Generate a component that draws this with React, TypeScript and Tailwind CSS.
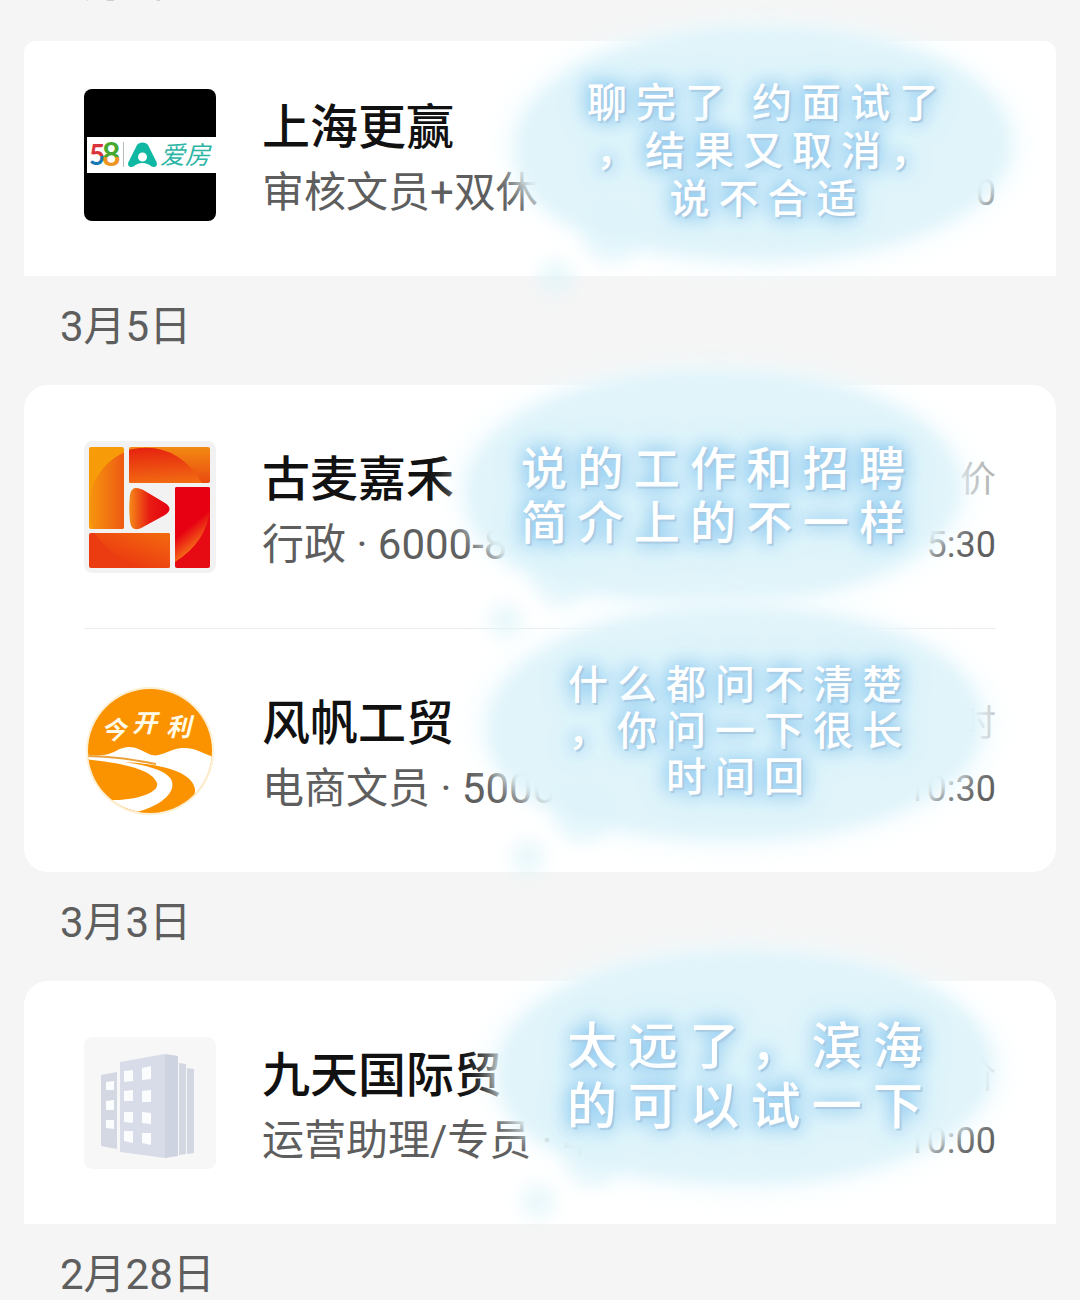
import { Fragment, type ReactNode } from 'react';
import clsx from 'clsx';

interface Interview {
  company: string;
  job: string;
  status?: string;
  time: string;
  logo: ReactNode;
  note: string[];
  noteBox: string;
  noteText: string;
}

function AifangLogo() {
  return (
    <svg viewBox="0 0 132 132" className="h-full w-full">
      <defs>
        <linearGradient id="five" x1="0" y1="0" x2="0" y2="1">
          <stop offset="0.56" stopColor="#d8343c" />
          <stop offset="0.56" stopColor="#1878b4" />
        </linearGradient>
        <linearGradient id="eight" x1="0" y1="0" x2="0" y2="1">
          <stop offset="0.58" stopColor="#46a82e" />
          <stop offset="0.58" stopColor="#ee9420" />
        </linearGradient>
      </defs>
      <rect width="132" height="132" fill="#000" />
      <rect x="3" y="48" width="129" height="36" fill="#fff" />
      <text x="5" y="76" fontSize="28" fontWeight="700" fontFamily="Lato, sans-serif" fill="url(#five)">5</text>
      <text x="18" y="77" fontSize="32" fontWeight="700" fontFamily="Lato, sans-serif" fill="url(#eight)">8</text>
      <path d="M39.500 53v25" stroke="#b4bcbc" strokeWidth="1" />
      <path
        fillRule="evenodd"
        fill="#10b8a4"
        d="M53 56c2-3.500 9-3.500 11 0l8.500 17c1.800 4-2 6-5 4.500-2.500-2-5.500-3.500-9-3.500s-6.500 1.500-9 3.500c-3 1.500-6.800-.5-5-4.500zM58.500 63.500a4.500 4.500 0 1 0 0 9 4.500 4.500 0 0 0 0-9z"
      />
      <text x="76" y="75" fontSize="25" fontStyle="italic" fontFamily="'Noto Sans CJK SC', sans-serif" fill="#2db5a6">
        爱房
      </text>
    </svg>
  );
}

function GumaiLogo() {
  return (
    <svg viewBox="0 0 132 132" className="h-full w-full">
      <defs>
        <linearGradient id="gLeft" x1="0" y1="0" x2="0.4" y2="0">
          <stop offset="0" stopColor="#f6960e" />
          <stop offset="0.7" stopColor="#ee5c12" />
        </linearGradient>
        <linearGradient id="gTop" x1="0.4" y1="0" x2="0.5" y2="1">
          <stop offset="0" stopColor="#e62410" />
          <stop offset="1" stopColor="#f26a12" />
        </linearGradient>
        <linearGradient id="gTopBack" x1="0" y1="0" x2="0" y2="1">
          <stop offset="0" stopColor="#f38a12" />
          <stop offset="1" stopColor="#ea4a10" />
        </linearGradient>
        <linearGradient id="gBottom" x1="1" y1="0" x2="0.2" y2="1">
          <stop offset="0" stopColor="#f47010" />
          <stop offset="1" stopColor="#ea3010" />
        </linearGradient>
        <linearGradient id="gRight" gradientUnits="userSpaceOnUse" x1="98" y1="84" x2="116" y2="106">
          <stop offset="0.2" stopColor="#e60012" />
          <stop offset="1" stopColor="#f77a18" />
        </linearGradient>
        <linearGradient id="gPlay" x1="0" y1="0" x2="1" y2="0">
          <stop offset="0" stopColor="#f58a18" />
          <stop offset="0.5" stopColor="#e81c12" />
          <stop offset="1" stopColor="#e60012" />
        </linearGradient>
        <clipPath id="cLeft"><rect x="5" y="6" width="35" height="82" rx="2" /></clipPath>
        <clipPath id="cTop"><rect x="45" y="6" width="81" height="36" rx="2" /></clipPath>
        <clipPath id="cBottom"><rect x="5" y="92" width="81" height="35" rx="2" /></clipPath>
        <clipPath id="cRight"><rect x="91" y="46" width="35" height="81" rx="2" /></clipPath>
      </defs>
      <rect width="132" height="132" rx="8" fill="#f3f2f2" />
      <g clipPath="url(#cLeft)">
        <rect x="5" y="6" width="35" height="82" fill="#f79c08" />
        <circle cx="65" cy="66" r="60" fill="url(#gLeft)" />
      </g>
      <g clipPath="url(#cTop)">
        <rect x="45" y="6" width="81" height="36" fill="url(#gTopBack)" />
        <path d="M40 10Q90-4 118 42H40Z" fill="url(#gTop)" />
      </g>
      <g clipPath="url(#cBottom)">
        <rect x="5" y="92" width="81" height="35" fill="#ea3c10" />
        <path d="M8 88Q26 118 62 127H90V88Z" fill="url(#gBottom)" />
      </g>
      <g clipPath="url(#cRight)">
        <rect x="91" y="46" width="35" height="81" fill="#e60a12" />
        <path d="M91 46H126V66Q124 100 91 121Z" fill="url(#gRight)" />
      </g>
      <path d="M46 54c2-10 9-7 15-4l20 12c6 4 6 8 0 12L59 86c-7 4-12 3-13-6-1-9-1-17 0-26z" fill="url(#gPlay)" />
    </svg>
  );
}

function JinkailiLogo() {
  return (
    <svg viewBox="0 0 132 132" className="h-full w-full">
      <defs>
        <clipPath id="disc"><circle cx="66" cy="66" r="62" /></clipPath>
      </defs>
      <circle cx="66" cy="66" r="64" fill="#fdf0d4" />
      <g clipPath="url(#disc)">
        <rect width="132" height="132" fill="#fb9300" />
        <path
          fill="#fff"
          d="M0 69C16 72 24 70 32 66 46 58 54 64 65 69 76 74 84 64 98 63 110 62 118 68 132 73V132H106C60 132 40 124 26 115 50 116 76 108 73 98 68 84 38 78 0 74z"
        />
        <path fill="#fb9300" d="M40 77C76 79 108 86 111 104 112 114 100 124 88 128 76 130 66 130 53 127 74 122 94 108 87 94 80 84 60 80 40 77z" />
        <path d="M0 71C30 71 50 75 72 79" fill="none" stroke="#eba23c" strokeWidth="2" />
      </g>
      <text
        x="17 48 82"
        y="54 47 51"
        fontSize="25"
        fontStyle="italic"
        fontWeight="700"
        fontFamily="'Noto Sans CJK SC', sans-serif"
        fill="#fffbe8"
      >
        今开利
      </text>
    </svg>
  );
}

function BuildingLogo() {
  return (
    <svg viewBox="0 0 132 132" className="h-full w-full">
      <rect width="132" height="132" rx="8" fill="#f7f7f7" />
      <path d="M17 38l16-3v77l-16-3z" fill="#d4d8e3" />
      <path d="M36 25l45-8v104l-45-6z" fill="#d8dce8" />
      <path d="M81 17l13 2v100l-13 2z" fill="#cdd3e0" />
      <path d="M95 26l7 1v90l-7 1zM103 31l7 1v84l-7 1z" fill="#d2d7e2" />
      <g fill="#fbfcfd">
        <path d="M22 45l8-1v9h-8zM22 64l8-1v10h-8zM22 83h8v9l-8-1z" />
        <path d="M40 34l9-1v11l-9 1zM40 54l9-1v11h-9zM40 75h9v11l-9-1zM40 94h9v12l-9-2z" />
        <path d="M58 31l9-2v13l-9 1zM58 54l9-1v12h-9zM58 75l9 1v11l-9-1zM58 96h9v12l-9-2z" />
      </g>
    </svg>
  );
}

// soft speech cloud with two trailing puffs
function Cloud() {
  return (
    <svg viewBox="0 0 500 234" className="absolute inset-0 h-full w-full overflow-visible">
      <defs>
        <filter id="halo" x="-30%" y="-50%" width="160%" height="200%">
          <feGaussianBlur stdDeviation="14" />
        </filter>
        <filter id="edge" x="-30%" y="-50%" width="160%" height="200%">
          <feGaussianBlur stdDeviation="8" />
        </filter>
        <filter id="puff" x="-80%" y="-80%" width="260%" height="260%">
          <feGaussianBlur stdDeviation="9" />
        </filter>
      </defs>
      <ellipse cx="250" cy="119" rx="258" ry="124" fill="#f0fbfe" opacity="0.8" filter="url(#halo)" />
      <path
        d="M3 124C3 54 110 2 246 2C390 2 497 48 497 120C497 182 390 234 256 234C120 234 3 204 3 124z"
        fill="#e0f4fa"
        filter="url(#edge)"
      />
      <circle cx="98" cy="210" r="28" fill="#def4fa" opacity="0.7" filter="url(#puff)" />
      <circle cx="43" cy="252" r="17" fill="#dff5f9" opacity="0.7" filter="url(#puff)" />
    </svg>
  );
}

function Note({ lines, box, text }: { lines: string[]; box: string; text: string }) {
  return (
    <div className={clsx('absolute z-10 flex h-[234px] w-[500px] items-center justify-center pt-3', box)}>
      <Cloud />
      <p
        className={clsx(
          'relative text-center font-["Noto_Sans_CJK_SC",sans-serif] font-medium whitespace-pre text-white',
          '[text-shadow:2px_2px_1px_#a9cbe4,0_0_16px_#86c4ee,0_0_20px_#96cff3,0_0_32px_#a3d8f5]',
          text,
        )}
      >
        {lines.map((line) => (
          <Fragment key={line}>
            {line}
            <br />
          </Fragment>
        ))}
      </p>
    </div>
  );
}

function InterviewRow({ item, compact }: { item: Interview; compact?: boolean }) {
  return (
    <li className="relative px-15">
      <div className={clsx('flex items-start gap-[46px] pb-[51px]', compact ? 'pt-12' : 'pt-14')}>
        <div className="size-[132px] shrink-0 overflow-hidden rounded-lg">{item.logo}</div>
        <div className="min-w-0 flex-1 pt-1.5">
          <div className="flex items-center justify-between">
            <h3 className="text-[48px] leading-[66px] font-medium text-[#111]">{item.company}</h3>
            <span className="text-[36px] text-[#b5b5b5]">{item.status}</span>
          </div>
          <div className="flex items-center justify-between text-[#5e5e5e]">
            <p className="text-[42px] leading-[64px]">{item.job}</p>
            <time className="text-[36px]">{item.time}</time>
          </div>
        </div>
      </div>
      <Note lines={item.note} box={item.noteBox} text={item.noteText} />
    </li>
  );
}

function DateLabel({ children }: { children: ReactNode }) {
  return (
    <h2 className="flex h-[109px] items-center px-[60px] pb-[9px] text-[42px] text-[#5e5e5e]">
      {children}
    </h2>
  );
}

function Card({ items, compact, className }: { items: Interview[]; compact?: boolean; className: string }) {
  return (
    <ul className={clsx('mx-6 bg-white', className)}>
      {items.map((item, i) => (
        <Fragment key={item.company}>
          {i > 0 && <li role="separator" className="mx-15 h-px bg-[#ececec]" />}
          <InterviewRow item={item} compact={compact} />
        </Fragment>
      ))}
    </ul>
  );
}

const march6: Interview[] = [
  {
    company: '上海更赢',
    job: '审核文员+双休',
    time: '0',
    logo: <AifangLogo />,
    note: ['聊 完 了   约 面 试 了', '， 结 果 又 取 消 ，', '说 不 合 适'],
    noteBox: '-top-4 right-[43px]',
    noteText: 'text-[40px] leading-[48px]',
  },
];

const march5: Interview[] = [
  {
    company: '古麦嘉禾',
    job: '行政 · 6000-8',
    status: '价',
    time: '5:30',
    logo: <GumaiLogo />,
    note: ['说 的 工 作 和 招 聘', '简 介 上 的 不 一 样'],
    noteBox: '-top-4 right-[93px]',
    noteText: 'text-[46px] leading-[54px]',
  },
  {
    company: '风帆工贸',
    job: '电商文员 · 5000',
    status: '时',
    time: '10:30',
    logo: <JinkailiLogo />,
    note: ['什 么 都 问 不 清 楚', '， 你 问 一 下 很 长', '时 间 回'],
    noteBox: '-top-6 right-[71px]',
    noteText: 'text-[40px] leading-[46px]',
  },
];

const march3: Interview[] = [
  {
    company: '九天国际贸',
    job: '运营助理/专员 · 4',
    status: '价',
    time: '10:00',
    logo: <BuildingLogo />,
    note: ['太 远 了 ， 滨 海', '的 可 以 试 一 下'],
    noteBox: '-top-8 right-[61px]',
    noteText: 'text-[50px] leading-[60px]',
  },
];

export default function App() {
  return (
    <main className='h-screen overflow-hidden bg-[#f5f5f5] font-[Roboto,"Noto_Sans_CJK_SC",sans-serif]'>
      {/* list is scrolled, so the first date sits just above the fold */}
      <div className="-mt-[68px]">
        <DateLabel>3月6日</DateLabel>
        <Card items={march6} compact className="rounded-t-xl" />
        <DateLabel>3月5日</DateLabel>
        <Card items={march5} className="rounded-3xl" />
        <DateLabel>3月3日</DateLabel>
        <Card items={march3} className="rounded-t-3xl" />
        <DateLabel>2月28日</DateLabel>
      </div>
    </main>
  );
}
